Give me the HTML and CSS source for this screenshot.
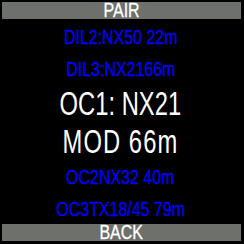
FILE: index.html
```html
<!DOCTYPE html>
<html lang="en">
<head>
  <meta charset="UTF-8">
  <title>Gas List</title>
  <link rel="stylesheet" href="styles.css">
</head>
<body>

<div class="screen">
  <div class="bar"><span class="txt">PAIR</span></div>

  <!-- gas list, current gas in the middle -->
  <div class="gas-list">
    <div class="row small"><span class="txt">DIL2:NX50 22m</span></div>
    <div class="row small"><span class="txt">DIL3:NX2166m</span></div>
    <div class="row big"><span class="txt">OC1: NX21</span></div>
    <div class="row big mod"><span class="txt">MOD 66m</span></div>
    <div class="row small"><span class="txt">OC2NX32 40m</span></div>
    <div class="row small"><span class="txt">OC3TX18/45 79m</span></div>
  </div>

  <div class="bar"><span class="txt">BACK</span></div>
</div>

</body>
</html>
```

FILE: styles.css
```css
body {
  margin: 0;
  padding: 0;
  background-color: #000;
  font-family: 'Liberation Sans', Arial, sans-serif;
}
.screen {
  width: 244px;
  height: 244px;
  padding: 2px 3px 3px 2px;
  box-sizing: border-box;
  display: flex;
  flex-direction: column;
}
.txt {
  display: inline-block;
  white-space: nowrap;
  -webkit-text-stroke: 0.3px currentColor;
}
.bar {
  flex: none;
  height: 17px;
  line-height: 17px;
  background-color: #6e706b;
  color: #fff;
  text-align: center;
  font-size: 20px;
}
.bar .txt {
  transform: scaleX(0.8);
}
.gas-list {
  flex: 1;
  min-height: 0;
  padding: 2px 2px 0 0;
  display: flex;
  flex-direction: column;
}
.row {
  flex: none;
  text-align: center;
}
.small {
  line-height: 32px;
  color: #0000ff;
  font-size: 21px;
}
.small .txt {
  transform: scaleX(0.76);
}
.big {
  line-height: 38px;
  color: #fff;
  font-size: 33px;
}
.big .txt {
  transform: scaleX(0.72);
  -webkit-text-stroke: 0;
}
.mod .txt {
  letter-spacing: 1.5px;
}
```
